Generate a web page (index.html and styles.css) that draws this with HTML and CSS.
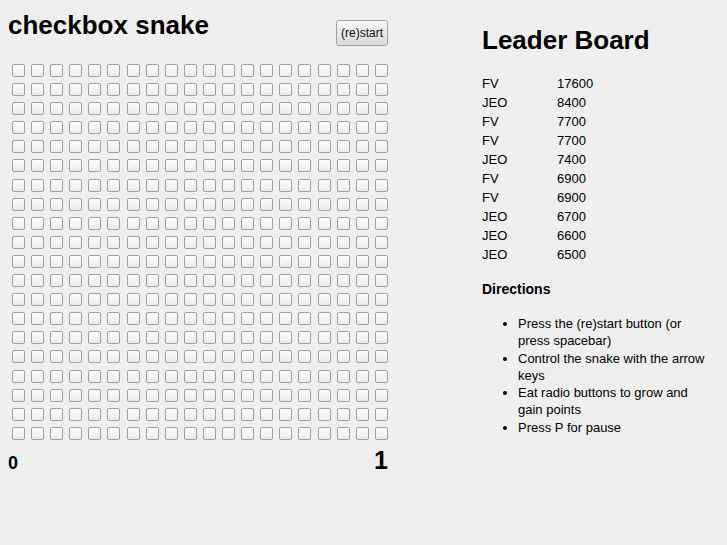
FILE: index.html
```html
<!DOCTYPE html>
<html lang="en">
<head>
    <meta charset="UTF-8">
    <title>checkbox snake</title>
    <link rel="stylesheet" href="styles.css">
</head>
<body>
    <div class="page">
        <div class="game">
            <div class="game-header">
                <h1>checkbox snake</h1>
                <button id="restart" type="button">(re)start</button>
            </div>
            <div id="board" class="board"></div>
            <div class="scores">
                <span id="score" class="score">0</span>
                <span id="length" class="length">1</span>
            </div>
        </div>

        <div class="sidebar">
            <h2>Leader Board</h2>
            <table class="leaders">
                <tr><td>FV</td><td>17600</td></tr>
                <tr><td>JEO</td><td>8400</td></tr>
                <tr><td>FV</td><td>7700</td></tr>
                <tr><td>FV</td><td>7700</td></tr>
                <tr><td>JEO</td><td>7400</td></tr>
                <tr><td>FV</td><td>6900</td></tr>
                <tr><td>FV</td><td>6900</td></tr>
                <tr><td>JEO</td><td>6700</td></tr>
                <tr><td>JEO</td><td>6600</td></tr>
                <tr><td>JEO</td><td>6500</td></tr>
            </table>
            <h3>Directions</h3>
            <ul class="directions">
                <li>Press the (re)start button (or press spacebar)</li>
                <li>Control the snake with the arrow keys</li>
                <li>Eat radio buttons to grow and gain points</li>
                <li>Press P for pause</li>
            </ul>
        </div>
    </div>

    <script>
        // build the 20x20 grid of checkboxes
        const board = document.getElementById('board');
        for (let i = 0; i < 400; i++) {
            const box = document.createElement('input');
            box.type = 'checkbox';
            board.appendChild(box);
        }
    </script>
</body>
</html>
```

FILE: styles.css
```css
body {
    margin: 8px;
    background: #efefef;
    color: #000;
    font-family: "Liberation Sans", Arial, sans-serif;
    font-size: 13px;
}

.page {
    display: flex;
    align-items: flex-start;
    gap: 92px;
}

.game {
    width: 382px;
}

.game-header {
    display: flex;
    justify-content: space-between;
    align-items: flex-start;
    height: 38px;
}

h1 {
    margin: 2px 0 0;
    font-size: 26px;
    line-height: 30px;
}

#restart {
    margin: 12px 2px 0 0;
    width: 52px;
    height: 26px;
    padding: 0;
    font-family: "Liberation Sans", Arial, sans-serif;
    font-size: 12px;
    color: #111;
    border: 1px solid #a2a2a2;
    border-radius: 3px;
    background: linear-gradient(#f8f8f8, #dadada);
}

.board {
    display: grid;
    grid-template-columns: repeat(20, 13px);
    gap: 6.1px;
    margin: 18px 0 0 4px;
}

.board input {
    appearance: none;
    -webkit-appearance: none;
    width: 13px;
    height: 13px;
    margin: 0;
    border: 1px solid #a0a0a0;
    border-radius: 2px;
    background: linear-gradient(#fdfdfd, #ececec);
}

.scores {
    display: flex;
    justify-content: space-between;
    align-items: baseline;
    margin-top: 6px;
    padding-right: 2px;
    line-height: 29px;
    font-weight: bold;
}

.score {
    font-size: 18px;
}

.length {
    font-size: 25px;
}

.sidebar {
    width: 226px;
}

h2 {
    margin: 17px 0 19px;
    font-size: 26px;
    line-height: 30px;
}

.leaders {
    border-collapse: collapse;
}

.leaders td {
    padding: 0;
    line-height: 19px;
}

.leaders td:first-child {
    width: 75px;
}

h3 {
    margin: 17px 0 18px;
    font-size: 14px;
    line-height: 16px;
}

.directions {
    margin: 0;
    padding-left: 36px;
    line-height: 17.3px;
}
```
